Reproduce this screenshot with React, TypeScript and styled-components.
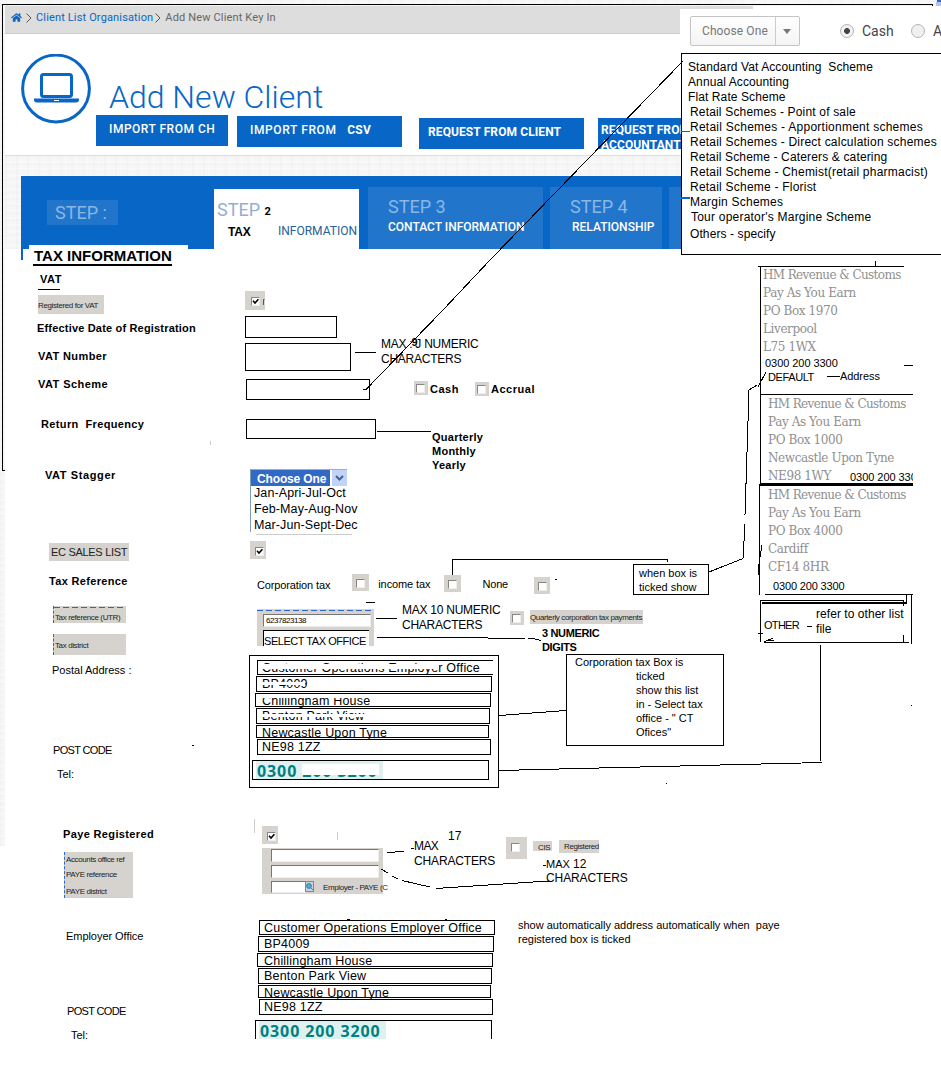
import React from "react";
import styled, { createGlobalStyle, css } from "styled-components";
import { FaHome } from "react-icons/fa";

const blue = "#0866c6";
const lightBlue = "#2175cb";
const grey = "#d6d3ce";
const arial = '"Liberation Sans", Arial, sans-serif';
const roboto = 'Roboto, "Liberation Sans", sans-serif';

const Global = createGlobalStyle`
  * { box-sizing: border-box; }
  body { margin: 0; background: #fff; font-family: ${arial}; color: #000; }
`;

const texture = css`
  background-color: #f6f6f6;
  background-image: repeating-linear-gradient(0deg, rgba(0,0,0,0.01) 0 1px, transparent 1px 3px, rgba(255,255,255,0.4) 3px 4px, transparent 4px 7px),
    repeating-linear-gradient(90deg, rgba(0,0,0,0.01) 0 2px, transparent 2px 5px, rgba(255,255,255,0.3) 5px 6px, transparent 6px 11px);
`;

const Page = styled.div`
  position: relative;
  width: 941px;
  height: 1068px;
  overflow: hidden;
  display: flex;
  background: #fff;
`;
const Gutter = styled.div`
  ${texture}
  width: 5px;
  height: 846px;
  flex: none;
`;
const Content = styled.div`
  width: 936px;
  flex: none;
  display: flex;
  flex-direction: column;
`;
const TopStrip = styled.div`
  ${texture}
  height: 6px;
  flex: none;
`;

/* breadcrumb and header */
const Breadcrumb = styled.nav`
  height: 28px;
  flex: none;
  width: 748px;
  background: #ddd;
  border-bottom: 1px solid #ccc;
  display: flex;
  align-items: flex-start;
  padding: 5px 0 0 6px;
  font: 400 11px/14px ${roboto};
  letter-spacing: 0.15px;
  color: #666;
`;
const HomeIcon = styled(FaHome)`
  width: 11px;
  height: 11px;
  color: ${blue};
  margin: 1px 4px 0 0;
`;
const Chevron = styled.svg`
  width: 6px;
  height: 10px;
  margin: 2px 4px 0 0;
  fill: none;
  stroke: #555;
`;
const Crumb = styled.span<{ $link?: boolean }>`
  color: ${(p) => (p.$link ? blue : "#666")};
  margin-right: ${(p) => (p.$link ? "2px" : "0")};
  white-space: nowrap;
`;
const Header = styled.header`
  height: 122px;
  flex: none;
  border-bottom: 1px solid #ddd;
  display: flex;
  padding: 20px 0 0 16px;
`;
const Laptop = styled.svg`
  width: 70px;
  height: 70px;
  flex: none;
`;
const HeaderBody = styled.div`
  padding: 25px 0 0 5px;
`;
const Title = styled.h1`
  margin: 0 0 0 13px;
  height: 36px;
  font: 300 32px/36px ${roboto};
  color: ${blue};
`;
const Actions = styled.div`
  display: flex;
  align-items: flex-start;
`;
const Action = styled.button<{ $w: number; $drop: number; $left: number; $pad: string; $bold?: boolean; $ls?: number }>`
  width: ${(p) => p.$w}px;
  height: 31px;
  flex: none;
  margin: ${(p) => p.$drop}px 0 0 ${(p) => p.$left}px;
  padding: ${(p) => p.$pad};
  border: 0;
  border-radius: 0;
  background: ${blue};
  color: #fff;
  text-align: left;
  white-space: pre;
  font: ${(p) => (p.$bold ? 700 : 500)} 12px/15px ${roboto};
  letter-spacing: ${(p) => p.$ls ?? 0.5}px;
  b { letter-spacing: 0.2px; }
`;

/* wizard */
const WizardArea = styled.section`
  ${texture}
  height: 93px;
  flex: none;
  padding: 20px 0 0 16px;
`;
const Wizard = styled.div`
  width: 664px;
  height: 73px;
  background: ${blue};
  display: flex;
  align-items: flex-end;
`;
const Step = styled.div<{ $w: number; $left: number; $pad: number }>`
  width: ${(p) => p.$w}px;
  height: 62px;
  margin-left: ${(p) => p.$left}px;
  background: ${lightBlue};
  padding: 10px 0 0 ${(p) => p.$pad}px;
  white-space: nowrap;
  flex: none;
`;
const FirstStep = styled.div`
  width: 71px;
  height: 25px;
  margin: 0 0 24px 26px;
  padding: 3px 0 0 8px;
  background: ${lightBlue};
  flex: none;
`;
const ActiveStep = styled.div`
  width: 145px;
  height: 60px;
  margin-left: 96px;
  padding: 11px 0 0 3px;
  background: #fff;
  flex: none;
`;
const StepNo = styled.div<{ $active?: boolean }>`
  font: 400 18px/20px ${roboto};
  color: ${(p) => (p.$active ? "#94afcd" : "#8cb7e4")};
  b { font: 700 11px/20px ${roboto}; color: #000; vertical-align: 1px; }
`;
const StepName = styled.div<{ $indent?: number }>`
  margin-left: ${(p) => p.$indent ?? 0}px;
  font: 500 12px/20px ${roboto};
  color: #fff;
`;
const ActiveName = styled.div`
  display: flex;
  justify-content: space-between;
  margin-top: -1px;
  padding: 0 2px 0 11px;
  font: 400 12px/20px ${roboto};
  color: #27609c;
  b { color: #000; font: 700 12px/22px ${arial}; letter-spacing: -0.2px; }
`;

/* form */
const Main = styled.main`
  display: flex;
  margin-top: -4px;
  position: relative;
  margin-left: -5px;
`;
const Form = styled.div`
  width: 760px;
  flex: none;
`;
const Heading = styled.h2`
  margin: 0 0 0 29px;
  width: 159px;
  height: 26px;
  padding: 2px 0 0 4px;
  background: #fff;
  font: 700 15px/18px ${arial};
  span { display: inline-block; width: 139px; border-bottom: 2px solid #000; line-height: 16px; letter-spacing: 0; padding-left: 1px; white-space: nowrap; height: 18px; }
`;
const Row = styled.div<{ $h: number }>`
  height: ${(p) => p.$h}px;
  display: flex;
  align-items: flex-start;
`;
const LabelCell = styled.div<{ $x: number; $drop: number }>`
  width: 245px;
  flex: none;
  padding: ${(p) => p.$drop}px 0 0 ${(p) => p.$x}px;
`;
const Label = styled.div<{ $bold?: boolean; $ls?: number; $gap?: number; $indent?: number }>`
  font: ${(p) => (p.$bold ? 700 : 400)} 11px/14px ${arial};
  letter-spacing: ${(p) => p.$ls ?? 0}px;
  margin: ${(p) => p.$gap ?? 0}px 0 0 ${(p) => p.$indent ?? 0}px;
  white-space: pre;
`;
const ShortRule = styled.div`
  width: 22px;
  height: 1px;
  background: #000;
  margin: 3px 0 0 -2px;
`;
const Chip = styled.div<{ $w: number; $h: number; $pad?: string; $gap?: number; $dashed?: boolean }>`
  width: ${(p) => p.$w}px;
  height: ${(p) => p.$h}px;
  margin-top: ${(p) => p.$gap ?? 0}px;
  padding: ${(p) => p.$pad ?? "0"};
  background: ${grey};
  border-left: ${(p) => (p.$dashed ? "1px dashed #2c66c8" : "0")};
  font: 8px/14px ${arial};
  letter-spacing: -0.38px;
  color: #222;
  white-space: nowrap;
  flex: none;
`;
const Place = styled.div<{ $x?: number; $y?: number }>`
  margin: ${(p) => p.$y ?? 0}px 0 0 ${(p) => p.$x ?? 0}px;
  flex: none;
`;
const Field = styled.div<{ $w: number; $h: number; $x?: number; $y?: number }>`
  width: ${(p) => p.$w}px;
  height: ${(p) => p.$h}px;
  margin: ${(p) => p.$y ?? 0}px 0 0 ${(p) => p.$x ?? 0}px;
  border: 1px solid #000;
  background: #fff;
  flex: none;
`;
const CheckPad = styled.span<{ $w: number; $h: number; $pad: string }>`
  display: flex;
  width: ${(p) => p.$w}px;
  height: ${(p) => p.$h}px;
  padding: ${(p) => p.$pad};
  background: ${grey};
`;
const Box = styled.span`
  width: 9px;
  height: 9px;
  flex: none;
  background: #fff;
  border: 1px solid #8a8782;
  border-right-color: #eee;
  border-bottom-color: #eee;
  display: flex;
  svg { width: 7px; height: 7px; }
`;
const CutLetter = styled.span`
  width: 2px;
  height: 6px;
  margin: 2px 0 0 3px;
  border-left: 1px solid #555;
  border-top: 1px solid #888;
`;

function Check({ w = 14, h = 14, pad = "3px 0 0 2px", on = false, children }: { w?: number; h?: number; pad?: string; on?: boolean; children?: React.ReactNode }) {
  return (
    <CheckPad $w={w} $h={h} $pad={pad}>
      <Box>
        {on && (
          <svg viewBox="0 0 7 7" fill="none" stroke="#000" strokeWidth="1.6">
            <path d="M1 2.8 3 5 6.4 1.3" />
          </svg>
        )}
      </Box>
      {children}
    </CheckPad>
  );
}

/* stagger list */
const Stagger = styled.div`
  margin: 4px 0 0 5px;
  border-left: 1px solid #7f9db9;
  height: 63px;
  font: 12.5px/16px ${arial};
  letter-spacing: 0.1px;
  white-space: nowrap;
`;
const StaggerHead = styled.div`
  display: flex;
  width: 96px;
  height: 17px;
  border-top: 1px solid #d0a860;
  font: 700 12px/18px ${arial};
  color: #fff;
  margin-bottom: -1px;
  letter-spacing: -0.15px;
`;
const StaggerValue = styled.span`
  width: 79px;
  padding-left: 6px;
  background: #316ac5;
`;
const StaggerArrow = styled.span`
  width: 15px;
  height: 16px;
  margin-left: 2px;
  background: #c1d3fb;
  display: flex;
  align-items: center;
  justify-content: center;
  svg { width: 9px; height: 6px; }
`;
const StaggerItem = styled.div`
  padding-left: 3px;
`;

/* grey legacy panels */
const LegacyPanel = styled.div<{ $w: number; $h: number; $pad: string }>`
  width: ${(p) => p.$w}px;
  height: ${(p) => p.$h}px;
  padding: ${(p) => p.$pad};
  background: ${grey};
`;
const Sunken = styled.div<{ $w: number; $h: number; $gap?: number }>`
  width: ${(p) => p.$w}px;
  height: ${(p) => p.$h}px;
  margin-bottom: ${(p) => p.$gap ?? 0}px;
  background: #fff;
  border: 1px solid #777;
  border-right-color: #eee;
  border-bottom-color: #eee;
  font: 8px/11px ${arial};
  letter-spacing: -0.45px;
  padding-left: 2px;
  flex: none;
`;
const OfficeSelect = styled.div`
  width: 106px;
  height: 16px;
  margin: 3px 0 0 0;
  padding-top: 2px;
  border: 1px solid #000;
  border-width: 1px 0 0 1px;
  background: #fff;
  font: 11px/17px ${arial};
  letter-spacing: -0.45px;
  white-space: nowrap;
`;
const Lookup = styled.div`
  display: flex;
  font: 8px/13px ${arial};
  letter-spacing: -0.4px;
  white-space: nowrap;
  color: #222;
`;
const LookupButton = styled.span`
  width: 11px;
  height: 11px;
  margin: 0 9px 0 -1px;
  background: #c9d2dc;
  border: 1px solid #888;
  display: flex;
  align-items: center;
  justify-content: center;
  svg { width: 7px; height: 7px; }
`;

/* postal address blocks */
const AddressFrame = styled.div<{ $framed?: boolean }>`
  width: 250px;
  height: ${(p) => (p.$framed ? 133 : 124)}px;
  border: ${(p) => (p.$framed ? "1px solid #000" : "0")};
  padding: ${(p) => (p.$framed ? "4px 0 0 2px" : "5px 0 0 5px")};
  overflow: hidden;
`;
const AddressLine = styled.div<{ $w: number; $h: number; $x: number; $gap?: number; $tx?: number; $open?: boolean }>`
  position: relative;
  width: ${(p) => p.$w}px;
  height: ${(p) => p.$h}px;
  margin: ${(p) => p.$gap ?? 0}px 0 0 ${(p) => p.$x}px;
  padding-left: ${(p) => p.$tx ?? 4}px;
  border: 1px solid #000;
  border-right-width: ${(p) => (p.$open ? 0 : 1)}px;
  font: 12.5px/14px ${arial};
  letter-spacing: 0.2px;
  white-space: nowrap;
`;
const Mask = styled.span<{ $x: number; $y: number; $w: number; $h: number }>`
  position: absolute;
  left: ${(p) => p.$x}px;
  top: ${(p) => p.$y}px;
  width: ${(p) => p.$w}px;
  height: ${(p) => p.$h}px;
  background: #fff;
`;
const Phone = styled.div<{ $w: number; $gap: number; $pad: string; $h?: number }>`
  position: relative;
  width: ${(p) => p.$w}px;
  height: ${(p) => p.$h ?? 20}px;
  margin-top: ${(p) => p.$gap}px;
  padding: ${(p) => p.$pad};
  border: 1px solid #000;
  border-bottom-width: ${(p) => (p.$h ? 0 : 1)}px;
`;
const PhoneNumber = styled.span`
  display: block;
  width: 127px;
  height: 18px;
  background: #def1f0;
  color: #008080;
  font: 700 16px/20px "Open Sans", ${arial};
  letter-spacing: 0.9px;
  padding-left: 1px;
  white-space: nowrap;
`;

/* offices column */
const Offices = styled.aside`
  width: 153px;
  flex: none;
  padding-top: 21px;
`;
const Office = styled.div<{ $h: number; $x: number }>`
  height: ${(p) => p.$h}px;
  padding-left: ${(p) => p.$x}px;
  overflow: hidden;
`;
const OfficeLine = styled.div<{ $ls?: number }>`
  font: 300 12px/18px "DejaVu Serif", "Liberation Serif", serif;
  letter-spacing: ${(p) => p.$ls ?? -0.4}px;
  color: #909090;
  white-space: nowrap;
`;
const OfficePhone = styled.div<{ $x?: number; $gap?: number; $ls?: number }>`
  font: 11px/14px ${arial};
  margin: ${(p) => p.$gap ?? 0}px 0 0 ${(p) => p.$x ?? 0}px;
  letter-spacing: ${(p) => p.$ls ?? -0.05}px;
  white-space: nowrap;
`;
const OfficeFlex = styled.div`
  display: flex;
`;
const OtherOffice = styled.div`
  display: flex;
  padding: 6px 0 0 4px;
  font: 12px/15px ${arial};
  letter-spacing: 0.05px;
  white-space: nowrap;
`;
const OtherName = styled.div`
  width: 52px;
  padding-top: 11px;
  font-size: 11px;
  letter-spacing: -0.7px;
`;

/* overlays */
const Annotations = styled.svg`
  position: absolute;
  left: 0;
  top: 0;
  fill: none;
  stroke: #000;
  shape-rendering: crispEdges;
  pointer-events: none;
`;
const Note = styled.div<{ $x: number; $y: number; $size?: number; $lh?: number; $bold?: boolean; $ls?: number }>`
  position: absolute;
  left: ${(p) => p.$x}px;
  top: ${(p) => p.$y}px;
  font: ${(p) => (p.$bold ? 700 : 400)} ${(p) => p.$size ?? 12}px/${(p) => p.$lh ?? 15}px ${arial};
  letter-spacing: ${(p) => p.$ls ?? 0}px;
  white-space: pre;
`;
const Raised = styled.b`
  position: relative;
  top: -2px;
  font-size: 11px;
  line-height: 1;
  margin: 0 -2px 0 -1px;
`;
const Callout = styled.div<{ $x: number; $y: number; $w: number; $h: number; $pad: string }>`
  position: absolute;
  left: ${(p) => p.$x}px;
  top: ${(p) => p.$y}px;
  width: ${(p) => p.$w}px;
  height: ${(p) => p.$h}px;
  padding: ${(p) => p.$pad};
  border: 1px solid #000;
  background: #fff;
  font: 11px/14px ${arial};
  white-space: pre;
`;
const Indented = styled.div`
  padding-left: 61px;
`;
const SchemePopup = styled.div`
  position: absolute;
  left: 680px;
  top: 9px;
  width: 261px;
  height: 246px;
`;
const SchemeBar = styled.div`
  height: 44px;
  background: #fff;
  display: flex;
  align-items: center;
  padding-left: 10px;
  font: 14px/18px ${roboto};
  color: #444;
  white-space: nowrap;
`;
const SchemeSelect = styled.div`
  width: 110px;
  height: 30px;
  flex: none;
  border: 1px solid #c4c4c4;
  border-radius: 2px;
  background: linear-gradient(#fff, #f4f4f4);
  display: flex;
  margin-right: 40px;
  font: 12px/29px ${roboto};
  letter-spacing: 0.1px;
  color: #777;
`;
const SchemeValue = styled.span`
  width: 85px;
  padding-left: 11px;
  border-right: 1px solid #ccc;
`;
const Caret = styled.span`
  margin: 12px 0 0 7px;
  width: 0;
  height: 0;
  border: 4.5px solid transparent;
  border-top: 5px solid #777;
  border-bottom: 0;
`;
const Radio = styled.span<{ $on?: boolean }>`
  width: 14px;
  height: 14px;
  flex: none;
  border: 1px solid #b5b5b5;
  border-radius: 50%;
  background: ${(p) => (p.$on ? "radial-gradient(circle, #444 0 2.6px, #f2f2f2 3.2px)" : "#f0f0f0")};
`;
const RadioText = styled.span<{ $w?: number }>`
  margin-left: 8px;
  width: ${(p) => p.$w ?? 20}px;
  flex: none;
`;
const SchemeList = styled.div`
  height: 202px;
  margin-left: 1px;
  border: 1px solid #000;
  border-right: 0;
  background: #fff;
  padding: 6px 0 0 6px;
  font: 12px/15px ${arial};
  white-space: pre;
`;
const SchemeItem = styled.div<{ $in?: number; $gap?: number; $ls?: number }>`
  margin: ${(p) => p.$gap ?? 0}px 0 0 ${(p) => p.$in ?? 0}px;
  letter-spacing: ${(p) => p.$ls ?? 0.22}px;
`;

const addressLines: { text: string; h: number; x: number; w: number; gap: number; mask?: number[] }[] = [
  { text: "Customer Operations Employer Office", h: 15, x: 5, w: 236, gap: 0, mask: [3, 3, 178, 5] },
  { text: "BP4009", h: 16, x: 4, w: 236, gap: 1, mask: [3, 5, 45, 3] },
  { text: "Chillingham House", h: 14, x: 3, w: 236, gap: 1, mask: [3, 2, 108, 2] },
  { text: "Benton Park View", h: 16, x: 4, w: 234, gap: 1, mask: [3, 5, 106, 3] },
  { text: "Newcastle Upon Tyne", h: 13, x: 4, w: 233, gap: 1 },
  { text: "NE98 1ZZ", h: 16, x: 5, w: 234, gap: 1 },
];

function Address({ masked = false }: { masked?: boolean }) {
  return (
    <AddressFrame $framed={masked}>
      {addressLines.map((l, i) => (
        <AddressLine key={l.text} $h={l.h} $w={l.w} $x={masked ? l.x : l.x - 1} $gap={l.gap} $tx={9 - l.x} $open={masked && i === 0}>
          {l.text}
          {masked && l.mask && <Mask $x={l.mask[0]} $y={l.mask[1]} $w={l.mask[2]} $h={l.mask[3]} />}
        </AddressLine>
      ))}
      <Phone $w={237} $gap={5} $pad={masked ? "0 0 0 3px" : "0 0 0 3px"} $h={masked ? undefined : 19}>
        <PhoneNumber>0300 200 3200</PhoneNumber>
        {masked && <Mask $x={49} $y={3} $w={77} $h={11} />}
      </Phone>
    </AddressFrame>
  );
}

export default function App() {
  return (
    <Page>
      <Global />
      <Gutter />
      <Content>
        <TopStrip />
        <Breadcrumb>
          <HomeIcon />
          <Chevron viewBox="0 0 6 10"><path d="M.5 .5 5 5 .5 9.5" /></Chevron>
          <Crumb $link>Client List Organisation</Crumb>
          <Chevron viewBox="0 0 6 10"><path d="M.5 .5 5 5 .5 9.5" /></Chevron>
          <Crumb>Add New Client Key In</Crumb>
        </Breadcrumb>
        <Header>
          <Laptop viewBox="0 0 70 70" fill="none" stroke={blue}>
            <circle cx="35" cy="34.5" r="33.4" strokeWidth="3" />
            <rect x="20.5" y="20.5" width="30" height="22" rx="2" strokeWidth="3" />
            <path d="M13 44.5h45v1a3 3 0 0 1-3 3H16a3 3 0 0 1-3-3z" fill={blue} stroke="none" />
            <path d="M33 46.5h5" stroke="#fff" strokeWidth="1" />
          </Laptop>
          <HeaderBody>
            <Title>Add New Client</Title>
            <Actions>
              <Action $w={132} $drop={0} $left={0} $pad="0 0 2px 13px">IMPORT FROM CH</Action>
              <Action $w={165} $drop={1} $left={9} $pad="0 0 2px 13px" $ls={0.6}>IMPORT FROM   <b>CSV</b></Action>
              <Action $w={165} $drop={3} $left={17} $pad="0 0 3px 9px" $bold $ls={0.1}>REQUEST FROM CLIENT</Action>
              <Action $w={100} $drop={3} $left={14} $pad="5px 0 0 3px" $bold $ls={0.1}>{"REQUEST FROM\nACCOUNTANT"}</Action>
            </Actions>
          </HeaderBody>
        </Header>
        <WizardArea>
          <Wizard>
            <FirstStep><StepNo>STEP :</StepNo></FirstStep>
            <ActiveStep>
              <StepNo $active>STEP <b>2</b></StepNo>
              <ActiveName><b>TAX</b><span>INFORMATION</span></ActiveName>
            </ActiveStep>
            <Step $w={175} $left={9} $pad={20}><StepNo>STEP 3</StepNo><StepName>CONTACT INFORMATION</StepName></Step>
            <Step $w={112} $left={7} $pad={20}><StepNo>STEP 4</StepNo><StepName $indent={2}>RELATIONSHIP</StepName></Step>
            <Step $w={16} $left={7} $pad={0} />
          </Wizard>
        </WizardArea>

        <Main>
          <Form>
            <Heading><span>TAX INFORMATION</span></Heading>
            <Row $h={20}>
              <LabelCell $x={40} $drop={1}><Label $bold $ls={0.6}>VAT</Label><ShortRule /></LabelCell>
            </Row>
            <Row $h={25}>
              <LabelCell $x={38} $drop={4}><Chip $w={66} $h={19} $pad="4px 0 0 0">Registered for VAT</Chip></LabelCell>
              <Place><Check on w={20} h={19} pad="6px 0 0 6px"><CutLetter /></Check></Place>
            </Row>
            <Row $h={27}>
              <LabelCell $x={37} $drop={5}><Label $bold $ls={0.18}>Effective Date of Registration</Label></LabelCell>
              <Field $w={92} $h={22} />
            </Row>
            <Row $h={30}>
              <LabelCell $x={38} $drop={6}><Label $bold $ls={0.4}>VAT Number</Label></LabelCell>
              <Field $w={106} $h={28} />
            </Row>
            <Row $h={36}>
              <LabelCell $x={38} $drop={4}><Label $bold $ls={0.45}>VAT Scheme</Label></LabelCell>
              <Field $w={124} $h={21} $x={1} $y={6} />
              <Place $x={44} $y={8}><Check /></Place>
              <Place $x={2} $y={9}><Label $bold $ls={0.5}>Cash</Label></Place>
              <Place $x={16} $y={9}><Check /></Place>
              <Place $x={2} $y={9}><Label $bold $ls={0.55}>Accrual</Label></Place>
            </Row>
            <Row $h={56}>
              <LabelCell $x={41} $drop={8}><Label $bold $ls={0.36}>Return  Frequency</Label></LabelCell>
              <Field $w={130} $h={20} $x={1} $y={10} />
            </Row>
            <Row $h={76}>
              <LabelCell $x={45} $drop={3}><Label $bold $ls={0.6}>VAT Stagger</Label></LabelCell>
              <Stagger>
                <StaggerHead>
                  <StaggerValue>Choose One</StaggerValue>
                  <StaggerArrow><svg viewBox="0 0 9 6" fill="none" stroke="#4d6185" strokeWidth="2"><path d="M1 1l3.5 3.5L8 1" /></svg></StaggerArrow>
                </StaggerHead>
                <StaggerItem>Jan-Apri-Jul-Oct</StaggerItem>
                <StaggerItem>Feb-May-Aug-Nov</StaggerItem>
                <StaggerItem>Mar-Jun-Sept-Dec</StaggerItem>
              </Stagger>
            </Row>
            <Row $h={30}>
              <LabelCell $x={49} $drop={2}>
                <Chip $w={80} $h={18} $pad="2px 0 0 2px"><Label $ls={-0.3}>EC SALES LIST</Label></Chip>
              </LabelCell>
              <Place $x={5}><Check on w={16} h={18} pad="6px 0 0 5px" /></Place>
            </Row>
            <Row $h={32}>
              <LabelCell $x={49} $drop={3}><Label $bold $ls={0.33}>Tax Reference</Label></LabelCell>
              <Place $x={12} $y={7}><Label $ls={-0.13}>Corporation tax</Label></Place>
              <Place $x={22} $y={3}><Check w={17} h={17} pad="5px 0 0 4px" /></Place>
              <Place $x={9} $y={6}><Label $ls={-0.1}>income tax</Label></Place>
              <Place $x={14} $y={4}><Check w={17} h={17} pad="5px 0 0 4px" /></Place>
              <Place $x={21} $y={6}><Label $ls={-0.2}>None</Label></Place>
              <Place $x={26} $y={6}><Check w={16} h={17} pad="5px 0 0 4px" /></Place>
            </Row>
            <Row $h={52}>
              <LabelCell $x={53} $drop={3}>
                <Chip $w={73} $h={17} $pad="5px 0 0 1px" $dashed>Tax reference (UTR)</Chip>
                <Chip $w={73} $h={21} $pad="5px 0 0 1px" $gap={11} $dashed>Tax district</Chip>
              </LabelCell>
              <Place $x={12} $y={6}>
                <LegacyPanel $w={117} $h={37} $pad="5px 0 0 6px">
                  <Sunken $w={108} $h={13}>6237823138</Sunken>
                  <OfficeSelect>SELECT TAX OFFICE</OfficeSelect>
                </LegacyPanel>
              </Place>
              <Place $x={136} $y={8}><Check pad="3px 0 0 2px" /></Place>
              <Place $x={6} $y={7}><Chip $w={113} $h={14} $pad="1px 0 0 0">Quarterly corporation tax payments</Chip></Place>
            </Row>
            <Row $h={165}>
              <LabelCell $x={52} $drop={8}>
                <Label>Postal Address :</Label>
                <Label $gap={66} $indent={1} $ls={-0.65}>POST CODE</Label>
                <Label $gap={10} $indent={5}>Tel:</Label>
              </LabelCell>
              <Place $x={4}><Address masked /></Place>
            </Row>
            <Row $h={26}>
              <LabelCell $x={63} $drop={7}><Label $bold $ls={0.36}>Paye Registered</Label></LabelCell>
              <Place $x={17} $y={6}><Check on w={16} h={18} pad="6px 0 0 5px" /></Place>
            </Row>
            <Row $h={69}>
              <LabelCell $x={64} $drop={6}>
                <Chip $w={69} $h={46} $pad="1px 0 0 1px" $dashed>
                  <div>Accounts office ref</div>
                  <Place $y={1}>PAYE reference</Place>
                  <Place $y={3}>PAYE district</Place>
                </Chip>
              </LabelCell>
              <Place $x={17} $y={2}>
                <LegacyPanel $w={121} $h={46} $pad="1px 0 0 9px">
                  <Sunken $w={108} $h={13} $gap={3} />
                  <Sunken $w={108} $h={13} $gap={3} />
                  <Lookup>
                    <Sunken $w={35} $h={12} />
                    <LookupButton><svg viewBox="0 0 7 7"><circle cx="3" cy="3" r="2.4" fill="#3bb7d8" stroke="#47a" /><path d="M5 5l2 2" stroke="#a4c" /></svg></LookupButton>
                    Employer - PAYE (C
                  </Lookup>
                </LegacyPanel>
              </Place>
              <Place $x={123} $y={-9}><Check w={21} h={22} pad="6px 0 0 5px" /></Place>
              <Place $x={6} $y={-5}><Chip $w={19} $h={10} $pad="0 0 0 5px">CIS</Chip></Place>
              <Place $x={7} $y={-6}><Chip $w={40} $h={13} $pad="0 0 0 5px">Registered</Chip></Place>
            </Row>
            <Row $h={130}>
              <LabelCell $x={66} $drop={14}>
                <Label $ls={-0.05}>Employer Office</Label>
                <Label $gap={61} $indent={1} $ls={-0.65}>POST CODE</Label>
                <Label $gap={10} $indent={5}>Tel:</Label>
              </LabelCell>
              <Place $x={5}><Address /></Place>
            </Row>
          </Form>

          <Offices>
            <Office $h={129} $x={3}>
              <OfficeLine $ls={-0.62}>HM Revenue &amp; Customs</OfficeLine>
              <OfficeLine>Pay As You Earn</OfficeLine>
              <OfficeLine>PO Box 1970</OfficeLine>
              <OfficeLine>Liverpool</OfficeLine>
              <OfficeLine>L75 1WX</OfficeLine>
              <OfficePhone $x={2}>0300 200 3300</OfficePhone>
              <OfficeFlex>
                <OfficePhone $x={5} $ls={-0.4}>DEFAULT</OfficePhone>
                <OfficePhone $x={26} $gap={-1}>Address</OfficePhone>
              </OfficeFlex>
            </Office>
            <Office $h={91} $x={8}>
              <OfficeLine $ls={-0.62}>HM Revenue &amp; Customs</OfficeLine>
              <OfficeLine>Pay As You Earn</OfficeLine>
              <OfficeLine>PO Box 1000</OfficeLine>
              <OfficeLine>Newcastle Upon Tyne</OfficeLine>
              <OfficeFlex>
                <OfficeLine>NE98 1WY</OfficeLine>
                <OfficePhone $x={19} $gap={3}>0300 200 3300</OfficePhone>
              </OfficeFlex>
            </Office>
            <Office $h={115} $x={8}>
              <OfficeLine $ls={-0.62}>HM Revenue &amp; Customs</OfficeLine>
              <OfficeLine>Pay As You Earn</OfficeLine>
              <OfficeLine>PO Box 4000</OfficeLine>
              <OfficeLine>Cardiff</OfficeLine>
              <OfficeLine>CF14 8HR</OfficeLine>
              <OfficePhone $x={5} $gap={3} $ls={-0.15}>0300 200 3300</OfficePhone>
            </Office>
            <OtherOffice>
              <OtherName>OTHER</OtherName>
              <div>refer to other list<br />file</div>
            </OtherOffice>
          </Offices>
        </Main>
      </Content>

      <Note $x={381} $y={337} $ls={-0.25}>MAX :<Raised>9</Raised>J NUMERIC<br />CHARACTERS</Note>
      <Note $x={432} $y={430} $size={11} $lh={14} $bold $ls={0.25}>{"Quarterly\nMonthly\nYearly"}</Note>
      <Note $x={402} $y={603} $ls={-0.25}>{"MAX 10 NUMERIC\nCHARACTERS"}</Note>
      <Note $x={542} $y={626} $size={11} $lh={14} $bold $ls={-0.35}>{"3 NUMERIC\nDIGITS"}</Note>
      <Note $x={414} $y={839} $ls={-0.6}>MAX</Note>
      <Note $x={448} $y={829}>17</Note>
      <Note $x={414} $y={854} $ls={-0.15}>CHARACTERS</Note>
      <Note $x={546} $y={857} $size={11}>MAX</Note>
      <Note $x={573} $y={857}>12</Note>
      <Note $x={546} $y={871} $ls={-0.1}>CHARACTERS</Note>
      <Note $x={518} $y={918} $size={11} $lh={14}>{"show automatically address automatically when  paye\nregistered box is ticked"}</Note>
      <Callout $x={633} $y={564} $w={76} $h={31} $pad="1px 0 0 5px">{"when box is\nticked show"}</Callout>
      <Callout $x={566} $y={654} $w={158} $h={92} $pad="0 0 0 8px">
        Corporation tax Box is
        <Indented>{"ticked\nshow this list\nin - Select tax\noffice - \" CT\nOfices\""}</Indented>
      </Callout>

      <SchemePopup>
        <SchemeBar>
          <SchemeSelect><SchemeValue>Choose One</SchemeValue><Caret /></SchemeSelect>
          <Radio $on />
          <RadioText $w={49}>Cash</RadioText>
          <Radio />
          <RadioText>Accrual</RadioText>
        </SchemeBar>
        <SchemeList>
          <SchemeItem $ls={0.1}>Standard Vat Accounting  Scheme</SchemeItem>
          <SchemeItem $ls={0.1}>Annual Accounting</SchemeItem>
          <SchemeItem $ls={0.1}>Flat Rate Scheme</SchemeItem>
          <SchemeItem $in={2} $ls={0.17}>Retail Schemes - Point of sale</SchemeItem>
          <SchemeItem $in={2} $ls={0.25}>Retail Schemes - Apportionment schemes</SchemeItem>
          <SchemeItem $in={2}>Retail Schemes - Direct calculation schemes</SchemeItem>
          <SchemeItem $in={2} $ls={0.15}>Retail Scheme - Caterers &amp; catering</SchemeItem>
          <SchemeItem $in={2}>Retail Scheme - Chemist(retail pharmacist)</SchemeItem>
          <SchemeItem $in={2}>Retail Scheme - Florist</SchemeItem>
          <SchemeItem $in={2}>Margin Schemes</SchemeItem>
          <SchemeItem $in={3}>Tour operator's Margine Scheme</SchemeItem>
          <SchemeItem $in={2} $gap={2} $ls={0.1}>Others - specify</SchemeItem>
        </SchemeList>
      </SchemePopup>

      <Annotations width="941" height="1068" viewBox="0 0 941 1068">
        {/* page frame */}
        <path d="M5 470.5H2.5V4.5H932.5V6" />
        <path d="M681 131.5h9" stroke={blue} />
        <path d="M681 198h9" stroke={blue} strokeWidth="2" />
        <path d="M22 249v11" stroke={blue} strokeWidth="2" />
        <path d="M936 4h5" stroke="#aac4f5" strokeWidth="4" />
        <path d="M937 1h4" stroke="#316ac5" strokeWidth="2" />
        {/* form connectors */}
        <path d="M363 389.5h3L443 310 491 259 683 61" />
        <path d="M355 352.5h21M377 431.5h54" />
        <path d="M452.5 575V559.5H667.5V562" />
        <path d="M709 572 743 558.5 745 524M745 515 749 390 757 385M758 387 766 372" />
        <path d="M366 602.5h9M376 618.5h21M377 637.5h74l74 1M528 638.5h5l8 2" />
        <path d="M499 715.5 566 710.5M499 770.5 822 762.5M820.5 645v116" />
        <path d="M387 852.5 404 851.5M411 848.5h3M381 869l7 4M392 876l6 3M402 880.5 430 887M436 888.5 541 881.5h8M543 865.5h3" />
        {/* tax office frames */}
        <path d="M758 266.5H904M875.5 261v5M760.5 266V484M760 394.5H913M759.5 484V595M765 594.5H907M906 594.5h7" />
        <path d="M760 484.5H913" strokeWidth="3" />
        <path d="M904 365.5h9M827 376.5h13M762 545 758.5 567v8" />
        <path d="M760.5 600V642M760 600.5H904M906.5 594v9M911.5 594V644M764 642.5H909M903.5 600v6M903.5 635v8M758 633.5h5M764 642l9-4M767 641l7-1M807 626.5h5" />
        <path d="M762 603H907" strokeWidth="2" />
        {/* stray marks */}
        <path d="M192 745.5h2M666 783.5h1M911 705.5h1M347 919.5h3M445 919.5h2M555 579.5h2" />
        <path d="M254.5 819v14M337.5 832v8M256 534.5h96M210 441v4" stroke="#ccc" />
        <path d="M257 610.5H374" stroke="#2c66c8" strokeDasharray="6 3" />
        <path d="M54 607.5H126" stroke="#2c66c8" strokeDasharray="6 3" />
      </Annotations>
    </Page>
  );
}
